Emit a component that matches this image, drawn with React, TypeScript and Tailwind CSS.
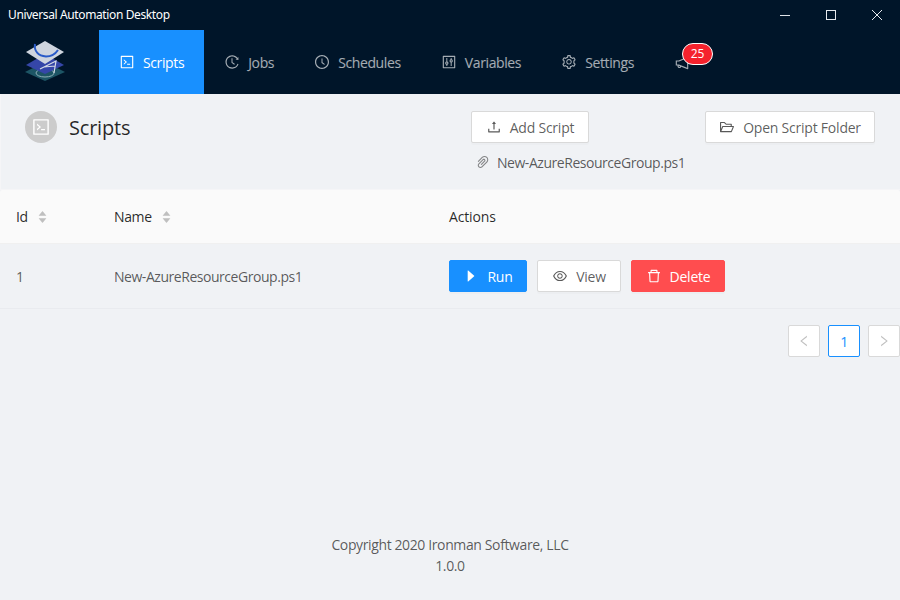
import React from "react";
import {
  AiOutlineCode, AiOutlineHistory, AiOutlineClockCircle, AiOutlineControl, AiOutlineSetting,
  AiOutlineNotification, AiOutlineUpload, AiOutlineFolderOpen, AiOutlinePaperClip,
  AiFillCaretRight, AiFillCaretUp, AiFillCaretDown, AiOutlineEye, AiOutlineDelete, AiOutlineLeft, AiOutlineRight,
} from "react-icons/ai";

function Logo() {
  return (
    <svg width="40" height="42" viewBox="0 0 40 42">
      <polygon points="20,22 40,32 20,41 0,32" fill="#1d5565" />
      <ellipse cx="20" cy="33" rx="9" ry="4" fill="none" stroke="#8fb0b8" strokeWidth="1" />
      <polygon points="20,14 39,25 20,34 1,25" fill="#3546a8" />
      <path d="M15 29 L31 21 L29 33 M19 27 L30 26" fill="none" stroke="#d5dbe6" strokeWidth="1.200" />
      <polygon points="20,1 39,12 20,24 1,12" fill="#cfd5df" />
      <path d="M10 4 C9 11 13 16 21 16.500 C27 16.500 31 13 33 10" fill="none" stroke="#2a5bc8" strokeWidth="2" />
    </svg>
  );
}

function NavItem({ icon, label, active }: { icon: React.ReactNode; label: string; active?: boolean }) {
  return (
    <div className={active ? "flex items-center gap-2 px-5 h-full bg-[#1890ff] text-white" : "flex items-center gap-2 px-5 h-full text-white/65"}>
      <span className="text-[16px]">{icon}</span>
      <span>{label}</span>
    </div>
  );
}

function Sorter() {
  return (
    <span className="flex flex-col text-[11px] text-[#bfbfbf] leading-none">
      <AiFillCaretUp className="-mb-[4px]" />
      <AiFillCaretDown />
    </span>
  );
}

function Btn({ className, icon, label }: { className: string; icon: React.ReactNode; label: string }) {
  return (
    <button className={"flex items-center justify-center gap-2 h-8 rounded-[2px] border shadow-[0_2px_0_rgba(0,0,0,0.016)] text-[14px] " + className}>
      <span className="text-[16px]">{icon}</span>
      <span className="tracking-[-0.22px]">{label}</span>
    </button>
  );
}

export default function App() {
  return (
    <div className="w-[900px] h-[600px] flex flex-col bg-[#f0f2f5] text-[14px] text-black/65 overflow-hidden whitespace-nowrap font-['Open_Sans','Noto_Sans',sans-serif] tracking-[-0.38px]">
      <div className="h-[30px] shrink-0 bg-[#001529] flex items-center justify-between text-white">
        <span className="pl-2 text-[12px] font-['Noto_Sans',sans-serif] tracking-[-0.38px]">Universal Automation Desktop</span>
        <div className="flex items-center h-full">
          <span className="w-[46px] flex justify-center"><span className="block w-[10px] h-px bg-[#dfe3e8]" /></span>
          <span className="w-[46px] flex justify-center"><span className="block w-[10px] h-[10px] border border-[#e6e9ee]" /></span>
          <span className="w-[46px] flex justify-center">
            <svg width="10" height="10" viewBox="0 0 10 10"><path d="M0 0L10 10M10 0L0 10" stroke="#e6e9ee" strokeWidth="1" /></svg>
          </span>
        </div>
      </div>

      <nav className="h-[64px] shrink-0 bg-[#001529] flex items-center">
        <div className="w-[99px] h-full flex items-center pl-[25px] pb-[3px] pt-[1px]"><Logo /></div>
        <NavItem active icon={<AiOutlineCode />} label="Scripts" />
        <NavItem icon={<AiOutlineHistory />} label="Jobs" />
        <NavItem icon={<AiOutlineClockCircle />} label="Schedules" />
        <NavItem icon={<AiOutlineControl />} label="Variables" />
        <NavItem icon={<AiOutlineSetting />} label="Settings" />
        <div className="relative ml-5 text-white/65 text-[16px] mt-[2px]">
          <AiOutlineNotification />
          <span className="absolute -top-[12px] left-[8px] h-[22px] w-[31px] rounded-full bg-[#f5222d] border border-white text-white text-[12px] leading-[20px] text-center tracking-normal">25</span>
        </div>
      </nav>

      <section className="h-[96px] shrink-0 flex items-start border-l border-b border-[#f5f5f7]">
        <div className="w-[470px] shrink-0 pl-6 pt-[17px] flex items-center gap-3">
          <span className="w-8 h-8 rounded-full bg-[#ccc] text-white flex items-center justify-center text-[20px]"><AiOutlineCode /></span>
          <span className="text-[20px] text-black/85 tracking-[-0.2px] pt-[2px]">Scripts</span>
        </div>
        <div className="pt-[17px] w-[118px] shrink-0">
          <Btn className="w-[118px] bg-white border-[#d9d9d9]" icon={<AiOutlineUpload />} label="Add Script" />
          <div className="flex items-center gap-[6px] mt-[8px] pl-1 h-[22px]">
            <AiOutlinePaperClip className="text-black/45 text-[16px] shrink-0" />
            <span className="tracking-[-0.46px]">New-AzureResourceGroup.ps1</span>
          </div>
        </div>
        <div className="pt-[17px] ml-[116px]">
          <Btn className="w-[170px] bg-white border-[#d9d9d9]" icon={<AiOutlineFolderOpen />} label="Open Script Folder" />
        </div>
      </section>

      <div className="h-[54px] shrink-0 bg-[#fafafa] border-b border-[#f0f0f0] flex items-center text-black/85 font-medium rounded-t-[2px]">
        <div className="w-[114px] pl-4 flex items-center gap-[9px]"><span>Id</span><Sorter /></div>
        <div className="w-[335px] flex items-center gap-[9px]"><span>Name</span><Sorter /></div>
        <div className="tracking-[-0.15px]">Actions</div>
      </div>
      <div className="h-[65px] shrink-0 border-b border-[#e9ebef] flex items-center">
        <div className="w-[114px] pl-4">1</div>
        <div className="w-[335px] tracking-[-0.46px]">New-AzureResourceGroup.ps1</div>
        <div className="flex items-center gap-[10px]">
          <Btn className="w-[78px] bg-[#1890ff] border-[#1890ff] text-white" icon={<AiFillCaretRight />} label="Run" />
          <Btn className="w-[84px] bg-white border-[#d9d9d9]" icon={<AiOutlineEye />} label="View" />
          <Btn className="w-[94px] bg-[#ff4d4f] border-[#ff4d4f] text-white" icon={<AiOutlineDelete />} label="Delete" />
        </div>
      </div>

      <div className="flex justify-end gap-2 pt-4">
        <span className="w-8 h-8 rounded-[2px] border border-[#d9d9d9] bg-white flex items-center justify-center text-[14px] text-black/25"><AiOutlineLeft /></span>
        <span className="w-8 h-8 rounded-[2px] border border-[#1890ff] bg-white flex items-center justify-center text-[#1890ff]">1</span>
        <span className="w-8 h-8 rounded-[2px] border border-[#d9d9d9] bg-white flex items-center justify-center text-[14px] text-black/25"><AiOutlineRight /></span>
      </div>

      <footer className="mt-auto pb-[24px] text-center leading-[21px]">
        <div>Copyright 2020 Ironman Software, LLC</div>
        <div>1.0.0</div>
      </footer>
    </div>
  );
}
